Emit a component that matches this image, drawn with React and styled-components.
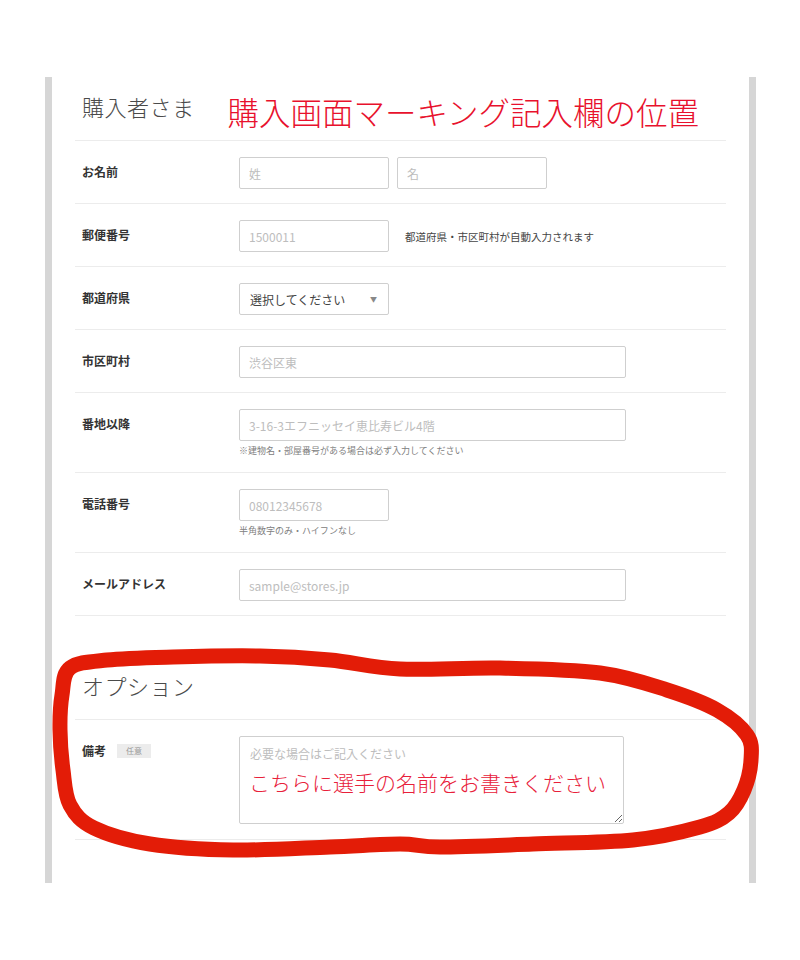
import React from "react";
import styled, { createGlobalStyle } from "styled-components";

const GlobalStyle = createGlobalStyle`
  html, body {
    margin: 0;
    padding: 0;
    background: #fff;
  }
  body {
    font-family: "Noto Sans CJK JP", "Noto Sans", "Liberation Sans", sans-serif;
    color: #333;
  }
`;

const fields = [
  { label: "郵便番号", kind: "zip", placeholder: "1500011", hint: "都道府県・市区町村が自動入力されます" },
  { label: "都道府県", kind: "select" },
  { label: "市区町村", kind: "text", placeholder: "渋谷区東", wide: true },
  {
    label: "番地以降",
    kind: "text",
    placeholder: "3-16-3エフニッセイ恵比寿ビル4階",
    wide: true,
    help: "※建物名・部屋番号がある場合は必ず入力してください",
  },
  { label: "電話番号", kind: "text", placeholder: "08012345678", help: "半角数字のみ・ハイフンなし" },
  { label: "メールアドレス", kind: "text", placeholder: "sample@stores.jp", wide: true },
];

// hand drawn marker loop, page coordinates
const loop = [
  [70, 668], [107, 660], [173, 657], [260, 656], [330, 660], [400, 669],
  [500, 668], [600, 673], [667, 690], [717, 710], [747, 735], [751, 760],
  [744, 790], [729, 813], [700, 827], [633, 840], [533, 844], [440, 847],
  [400, 844], [330, 847], [233, 850], [150, 844], [94, 828], [70, 805],
  [63, 770], [60, 730], [62, 695],
];

function smoothClosed(pts) {
  const n = pts.length;
  let d = `M${pts[0][0]},${pts[0][1]}`;
  for (let i = 0; i < n; i++) {
    const p0 = pts[(i - 1 + n) % n];
    const p1 = pts[i];
    const p2 = pts[(i + 1) % n];
    const p3 = pts[(i + 2) % n];
    const c1 = [p1[0] + (p2[0] - p0[0]) / 6, p1[1] + (p2[1] - p0[1]) / 6];
    const c2 = [p2[0] - (p3[0] - p1[0]) / 6, p2[1] - (p3[1] - p1[1]) / 6];
    d += ` C${c1[0].toFixed(1)},${c1[1].toFixed(1)} ${c2[0].toFixed(1)},${c2[1].toFixed(1)} ${p2[0]},${p2[1]}`;
  }
  return d + " Z";
}

export default function App() {
  return (
    <>
      <GlobalStyle />
      <Page>
        <Frame>
          <SectionHead>
            <Title>購入者さま</Title>
            <Annotation>購入画面マーキング記入欄の位置</Annotation>
          </SectionHead>

          <Row>
            <Label>お名前</Label>
            <Field>
              <Inline>
                <TextInput placeholder="姓" />
                <TextInput placeholder="名" />
              </Inline>
            </Field>
          </Row>

          {fields.map((f) => (
            <Row key={f.label}>
              <Label>{f.label}</Label>
              <Field>
                {f.kind === "select" ? (
                  <SelectButton type="button">
                    <span>選択してください</span>
                    <Caret>▼</Caret>
                  </SelectButton>
                ) : (
                  <Inline>
                    <TextInput placeholder={f.placeholder} $wide={f.wide} />
                    {f.hint && <Hint>{f.hint}</Hint>}
                  </Inline>
                )}
                {f.help && <Help>{f.help}</Help>}
              </Field>
            </Row>
          ))}

          <SectionHead $spaced>
            <Title>オプション</Title>
          </SectionHead>

          <Row $bottom={15}>
            <Label>
              備考
              <Tag>任意</Tag>
            </Label>
            <Field>
              <NoteWrap>
                <NoteArea placeholder="必要な場合はご記入ください" />
                <NoteMark>こちらに選手の名前をお書きください</NoteMark>
              </NoteWrap>
            </Field>
          </Row>
        </Frame>

        <Marker viewBox="0 0 800 960" width="800" height="960">
          <path
            d={smoothClosed(loop)}
            fill="none"
            stroke="#e31c07"
            strokeWidth="15"
            strokeLinejoin="round"
            strokeLinecap="round"
          />
        </Marker>
      </Page>
    </>
  );
}

const Page = styled.div`
  position: relative;
  width: 800px;
  min-height: 960px;
  padding-top: 77px;
  box-sizing: border-box;
`;

const Frame = styled.div`
  margin-left: 45px;
  width: 711px;
  box-sizing: border-box;
  border-left: 7px solid #d6d6d6;
  border-right: 7px solid #d6d6d6;
  padding: 0 23px 43px;
`;

const SectionHead = styled.div`
  display: flex;
  align-items: flex-start;
  height: 64px;
  box-sizing: border-box;
  padding: 14px 7px 0;
  margin-top: ${(p) => (p.$spaced ? "40px" : "0")};
  border-bottom: 1px solid #ececec;
`;

const Title = styled.h2`
  margin: 0;
  font-size: 22px;
  line-height: 30px;
  font-weight: 300;
  color: #4a4a4a;
  letter-spacing: 0.5px;
`;

const Annotation = styled.div`
  margin: 5px 0 0 33px;
  font-size: 31.5px;
  line-height: 30px;
  font-weight: 300;
  color: #e8112d;
  white-space: nowrap;
`;

const Row = styled.div`
  display: flex;
  align-items: flex-start;
  padding: 16px 7px ${(p) => p.$bottom ?? 14}px;
  border-bottom: 1px solid #ececec;
`;

const Label = styled.div`
  flex: 0 0 157px;
  display: flex;
  align-items: center;
  gap: 11px;
  font-size: 12px;
  font-weight: 700;
  line-height: 30px;
  color: #333;
`;

const Tag = styled.span`
  display: inline-block;
  background: #ececec;
  color: #999;
  font-size: 8px;
  font-weight: 400;
  line-height: 14px;
  padding: 0 9px;
`;

const Field = styled.div`
  display: flex;
  flex-direction: column;
`;

const Inline = styled.div`
  display: flex;
  align-items: center;
  gap: 8px;
`;

const TextInput = styled.input`
  width: ${(p) => (p.$wide ? "387px" : "150px")};
  height: 32px;
  box-sizing: border-box;
  border: 1px solid #cfcfcf;
  border-radius: 2px;
  padding: 0 9px;
  font-family: inherit;
  font-size: 12px;
  color: #333;
  background: #fff;
  &::placeholder {
    color: #bdbdbd;
  }
`;

const SelectButton = styled.button`
  width: 150px;
  height: 32px;
  box-sizing: border-box;
  display: flex;
  align-items: center;
  justify-content: space-between;
  border: 1px solid #cfcfcf;
  border-radius: 2px;
  padding: 0 11px 0 10px;
  background: #fff;
  font-family: inherit;
  font-size: 12px;
  color: #444;
  text-align: left;
`;

const Caret = styled.span`
  font-size: 7px;
  color: #888;
`;

const Hint = styled.span`
  margin-left: 8px;
  font-size: 10.5px;
  color: #444;
  white-space: nowrap;
`;

const Help = styled.div`
  margin-top: 3px;
  font-size: 9px;
  line-height: 14px;
  color: #808080;
`;

const NoteWrap = styled.div`
  position: relative;
`;

const NoteArea = styled.textarea`
  display: block;
  width: 385px;
  height: 88px;
  box-sizing: border-box;
  border: 1px solid #cfcfcf;
  border-radius: 2px;
  padding: 9px 10px;
  font-family: inherit;
  font-size: 12px;
  line-height: 16px;
  color: #333;
  resize: both;
  &::placeholder {
    color: #bdbdbd;
  }
`;

const NoteMark = styled.span`
  position: absolute;
  left: 10px;
  top: 33px;
  font-size: 21px;
  line-height: 26px;
  font-weight: 300;
  color: #e8203a;
  white-space: nowrap;
  pointer-events: none;
`;

const Marker = styled.svg`
  position: absolute;
  left: 0;
  top: 0;
  pointer-events: none;
`;
